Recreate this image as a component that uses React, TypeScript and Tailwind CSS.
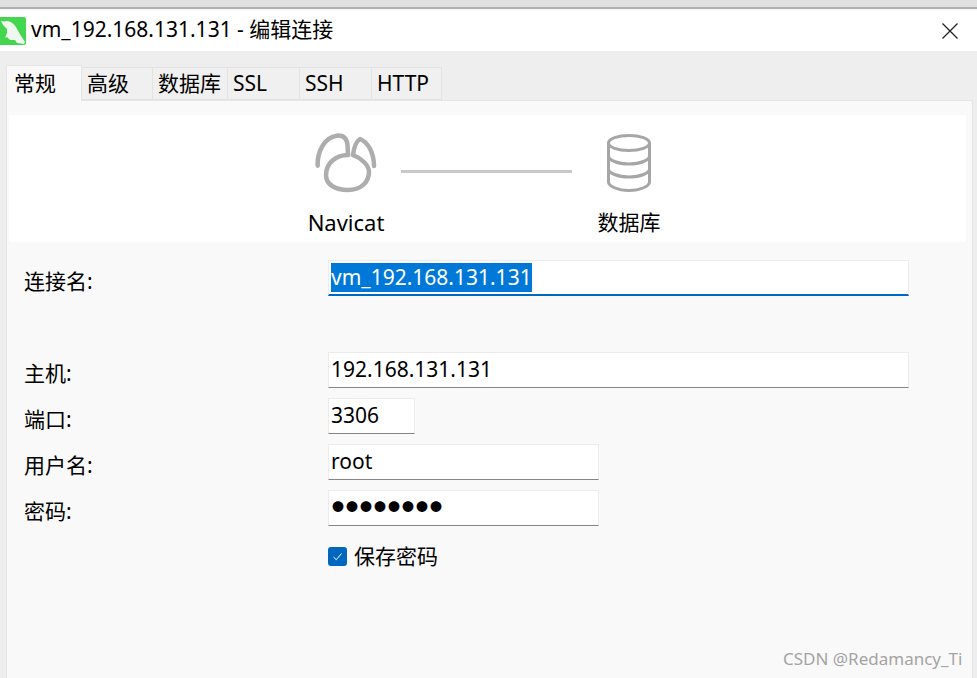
const font = { fontFamily: '"Noto Sans", "Noto Sans CJK SC", sans-serif' };

function Tab({ label, active, w }: { label: string; active?: boolean; w: string }) {
  return (
    <div
      className={
        active
          ? `${w} h-[36px] bg-[#f9f9f9] border border-b-0 border-[#e5e5e5] -mb-px z-10 pl-[7px] text-[21px] leading-[35px] text-black`
          : `${w} h-[33px] bg-[#f0f0f0] border border-l-0 border-[#e3e3e3] pl-[5px] text-[21px] leading-[31px] text-black`
      }
    >
      {label}
    </div>
  );
}

function Field({ w, children, mb = "mb-[10px]" }: { w: string; children: React.ReactNode; mb?: string }) {
  return (
    <div className={`${w} ${mb} h-[36px] bg-white border border-[#ececec] border-b-[#868686] pl-[2px] text-[21px] leading-[33px] text-black`}>
      {children}
    </div>
  );
}

function Row({ label, w, children, mb }: { label: string; w: string; children: React.ReactNode; mb?: string }) {
  return (
    <div className="flex">
      <div className="w-[304px] pt-[5px] text-[21px] leading-[32px] text-black">{label}</div>
      <Field w={w} mb={mb}>{children}</Field>
    </div>
  );
}

export default function App() {
  return (
    <div style={font} className="w-[977px] h-[678px] overflow-hidden bg-[#eeeeee] flex flex-col">
      <div className="h-[10px] bg-[#f2f2f2] pb-px">
        <div className="h-[9px] bg-[#e0e0e0] border-b-[2px] border-[#b0b0b0]" />
      </div>
      <div className="h-[41px] bg-white flex items-center pr-[19px]">
        <svg width="26" height="28" viewBox="0 0 26 28" className="shrink-0">
          <path d="M0 0h24a2 2 0 0 1 2 2v24a2 2 0 0 1-2 2H0z" fill="#44d64f" />
          <path d="M1 4 5 4.5C9 3 13 6 16 10c2 4 5 9 9 15l-1 2-7-1-2-3-5 0-3-3-2 1 2-5 0-4-4-4z" fill="#eef8ee" />
        </svg>
        <div className="ml-[5px] pb-[3px] text-[21px] leading-[28px] text-black flex-1">vm_192.168.131.131 - 编辑连接</div>
        <svg width="16" height="16" viewBox="0 0 16 16" fill="none" stroke="#222" strokeWidth="1.3">
          <path d="M0.5 0.5 15.5 15.5M15.5 0.5 0.5 15.5" />
        </svg>
      </div>
      <div className="h-[49px] pl-[6px] flex items-end">
        <Tab label="常规" active w="w-[76px]" />
        <Tab label="高级" w="w-[71px]" />
        <Tab label="数据库" w="w-[75px]" />
        <Tab label="SSL" w="w-[72px]" />
        <Tab label="SSH" w="w-[72px]" />
        <Tab label="HTTP" w="w-[70px]" />
      </div>
      <div className="relative flex-1 ml-[6px] mr-[4px] bg-[#f9f9f9] border border-b-0 border-[#e5e5e5] pl-[2px] pr-[6px] pt-[14px]">
        <div className="h-[127px] bg-white flex justify-center">
          <div className="w-[76px] flex flex-col items-center pt-[18px] mr-[17px]">
            <svg width="62" height="60" viewBox="9 8 62 60" fill="none" stroke="#adadad" strokeWidth="4.5" strokeLinecap="round" strokeLinejoin="round">
              <path d="M11.7 40.7C11 28 18 12 31 10.7 38 10 41 14 41.5 20L42 30" />
              <path d="M42 30C30 30 20 38 20 50 20 60 30 65 42 65 54 65 63 58 63 47 63 40 55 33 47 30" />
              <path d="M47 30C48 22 51 16 54 14 62 17 68 28 68 41" />
            </svg>
            <div className="mt-[15px] text-[22px] leading-[28px] text-black whitespace-nowrap">Navicat</div>
          </div>
          <div className="w-[171px] h-[3px] bg-[#c8c8c8] mt-[55px]" />
          <div className="w-[76px] flex flex-col items-center pt-[18px] ml-[19px]">
            <svg width="46" height="60" viewBox="0 0 46 60" fill="none" stroke="#a6a6a6" strokeWidth="3">
              <ellipse cx="23" cy="10" rx="20.5" ry="7.5" />
              <path d="M2.5 10v39c0 4 9 8.5 20.5 8.5S43.5 53 43.5 49V10" />
              <path d="M2.5 23c0 4 9 8 20.5 8s20.5-4 20.5-8" />
              <path d="M2.5 36c0 4 9 8 20.5 8s20.5-4 20.5-8" />
            </svg>
            <div className="mt-[15px] text-[21px] leading-[28px] text-black">数据库</div>
          </div>
        </div>
        <div className="pl-[15px] pt-[18px]">
          <Row label="连接名:" w="w-[581px] !border-b-[2px] !border-b-[#0067c0]" mb="mb-[56px]">
            <span className="bg-[#0078d7] text-white inline-block h-[29px] leading-[29px] mt-[2px]">vm_192.168.131.131</span>
          </Row>
          <Row label="主机:" w="w-[581px]">192.168.131.131</Row>
          <Row label="端口:" w="w-[87px]">3306</Row>
          <Row label="用户名:" w="w-[271px]">root</Row>
          <Row label="密码:" w="w-[271px]" mb="mb-[20px]">
            <span className="text-[12px] tracking-[2px] leading-[34px] block pl-px">●●●●●●●●</span>
          </Row>
          <div className="flex items-center pl-[304px] h-[20px]">
            <div className="w-[19px] h-[19px] rounded-[3px] bg-[#0067c0] flex items-center justify-center">
              <svg width="11" height="11" viewBox="0 0 11 11" fill="none" stroke="#fff" strokeWidth="1">
                <path d="M1.5 6 4.3 8.7 9.5 2.5" />
              </svg>
            </div>
            <div className="ml-[7px] text-[21px] leading-[28px] text-black">保存密码</div>
          </div>
        </div>
        <div className="absolute left-[776px] top-[547px] text-[17px] leading-[22px] text-[#a4a4a4] whitespace-nowrap">
          CSDN @Redamancy_Ti
        </div>
      </div>
    </div>
  );
}
